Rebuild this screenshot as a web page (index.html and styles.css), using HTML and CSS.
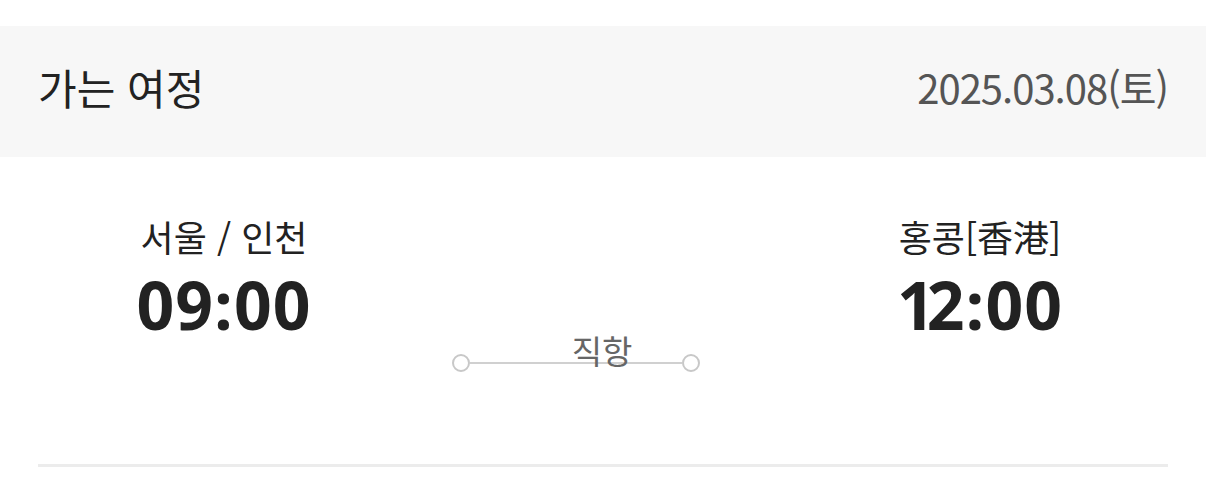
FILE: index.html
```html
<!DOCTYPE html>
<html lang="ko">
<head>
<meta charset="utf-8">
<title>가는 여정</title>
<link rel="stylesheet" href="styles.css">
</head>
<body>
<section class="leg">
  <header class="leg-head">
    <h2 class="leg-title">가는 여정</h2>
    <span class="leg-date">2025.03.08(토)</span>
  </header>
  <div class="journey">
    <div class="point">
      <div class="city">서울 / 인천</div>
      <div class="time">09:00</div>
    </div>
    <div class="route">
      <div class="route-line">
        <span class="dot"></span>
        <span class="bar"></span>
        <span class="dot"></span>
        <span class="route-label">직항</span>
      </div>
    </div>
    <div class="point">
      <div class="city">홍콩[香港]</div>
      <div class="time"><span class="digit-one">1</span>2:00</div>
    </div>
  </div>
  <div class="divider"></div>
</section>
</body>
</html>
```

FILE: styles.css
```css
html, body {
  margin: 0;
  padding: 0;
  background: #ffffff;
}
body {
  font-family: "Noto Sans CJK KR", "Noto Sans", sans-serif;
  color: #222222;
}
.leg {
  padding-top: 26px;
}
.leg-head {
  display: flex;
  justify-content: space-between;
  align-items: center;
  box-sizing: border-box;
  height: 131px;
  padding: 0 38px 10px 38px;
  background: #f7f7f7;
}
.leg-title {
  margin: 0;
  font-size: 42px;
  font-weight: 400;
  color: #222222;
}
.leg-date {
  font-size: 40px;
  letter-spacing: -1px;
  color: #555555;
}
.journey {
  display: grid;
  grid-template-columns: 372px 1fr 376px;
  padding: 0 38px;
  height: 307px;
  align-items: start;
}
.point {
  display: flex;
  flex-direction: column;
  align-items: center;
  padding-top: 56px;
}
.city {
  font-size: 36px;
  line-height: 46px;
  color: #222222;
}
.time {
  margin-top: 9px;
  font-family: "Open Sans", "Noto Sans", sans-serif;
  font-size: 66px;
  font-weight: 700;
  letter-spacing: 1px;
  line-height: 72px;
  color: #222222;
}
.digit-one {
  letter-spacing: -8px;
}
.route {
  padding: 197px 92px 0 42px;
}
.route-line {
  position: relative;
  display: flex;
  align-items: center;
  height: 18px;
}
.dot {
  width: 14px;
  height: 14px;
  border: 2px solid #c8c8c8;
  border-radius: 50%;
  background: #fff;
  flex: none;
}
.bar {
  flex: 1;
  height: 2px;
  background: #d0d0d0;
}
.route-label {
  position: absolute;
  left: 150px;
  bottom: 5px;
  transform: translateX(-50%);
  font-size: 33px;
  line-height: 1;
  color: #666666;
  white-space: nowrap;
}
.divider {
  margin: 0 38px;
  height: 3px;
  background: #ececec;
}
```
